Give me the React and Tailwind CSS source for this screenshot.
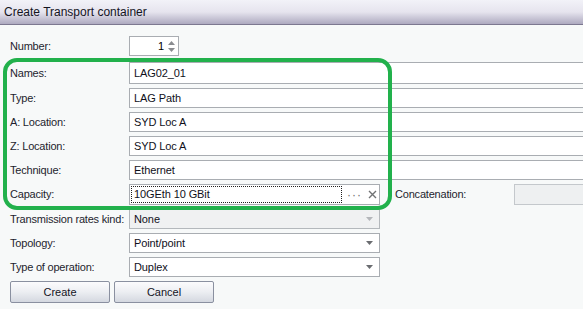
import React from "react";

const font = { fontFamily: '"Liberation Sans", Arial, sans-serif' };

function Label({ children }) {
  return (
    <div className="w-[129px] shrink-0 whitespace-nowrap pl-[10px] text-[11px] tracking-[-0.2px] text-[#1e1e2e]">
      {children}
    </div>
  );
}

function TextField({ value, className = "w-[470px]" }) {
  return (
    <div
      className={`flex h-full shrink-0 items-center border border-[#a9adb2] bg-white pl-[4px] text-[11px] tracking-[-0.1px] text-[#10101a] ${className}`}
    >
      {value}
    </div>
  );
}

function Arrow({ light }) {
  return (
    <svg width="7" height="4" viewBox="0 0 7 4" className="mr-[6px]">
      <path d="M0 0h7L3.5 4z" fill={light ? "#b4b6ba" : "#6a6c70"} />
    </svg>
  );
}

function Select({ value, disabled }) {
  return (
    <div
      className={`flex h-full w-[251px] items-center justify-between border pl-[4px] text-[11px] tracking-[-0.1px] text-[#10101a] ${
        disabled ? "border-[#b4b8bc] bg-[#f0f1f2]" : "border-[#a9adb2] bg-white"
      }`}
    >
      <span>{value}</span>
      <Arrow light={disabled} />
    </div>
  );
}

function Row({ label, h = "h-[20px]", children }) {
  return (
    <div className={`flex items-center ${h}`}>
      <Label>{label}</Label>
      {children}
    </div>
  );
}

export default function App() {
  return (
    <div className="relative h-[309px] w-[583px] overflow-hidden bg-[#f7f9f9]" style={font}>
      <div className="flex h-[25px] items-center border-b border-[#7c7890] bg-gradient-to-b from-[#f2f2f8] via-[#e6e4ee] to-[#aeaac0] pl-[4px] text-[12px] text-[#14141e]">
        Create Transport container
      </div>

      <div className="flex flex-col pt-[11px]">
        <Row label="Number:">
          <div className="flex h-full w-[50px] items-center justify-end border border-[#a9adb2] bg-white text-[11px]">
            <span className="mr-[4px]">1</span>
            <div className="mr-[3px] flex flex-col gap-[3px]">
              <svg width="7" height="4" viewBox="0 0 7 4"><path d="M0 4h7L3.5 0z" fill="#8a8c90" /></svg>
              <svg width="7" height="4" viewBox="0 0 7 4"><path d="M0 0h7L3.5 4z" fill="#8a8c90" /></svg>
            </div>
          </div>
        </Row>

        <div className="mt-[6px] flex flex-col gap-[4px]">
          <Row label="Names:" h="h-[22px]"><TextField value="LAG02_01" /></Row>
          <Row label="Type:"><TextField value="LAG Path" /></Row>
          <Row label="A: Location:"><TextField value="SYD Loc A" /></Row>
          <Row label="Z: Location:"><TextField value="SYD Loc A" /></Row>
          <Row label="Technique:"><TextField value="Ethernet" /></Row>
          <Row label="Capacity:" h="h-[21px]">
            <div className="flex h-full w-[251px] shrink-0 items-center border border-[#a9adb2] bg-white">
              <div className="ml-[1px] flex h-[17px] w-[211px] items-center border border-dotted border-[#202020] pl-[2px] text-[11px] tracking-[-0.1px] text-[#10101a]">
                10GEth 10 GBit
              </div>
              <span className="ml-[5px] text-[12px] leading-none tracking-[1px] text-[#707274]">···</span>
              <svg width="9" height="9" viewBox="0 0 9 9" className="ml-[6px]">
                <path d="M1 1l7 7M8 1L1 8" stroke="#707274" strokeWidth="1.4" />
              </svg>
            </div>
            <span className="ml-[15px] w-[119px] shrink-0 text-[11px] tracking-[-0.2px] text-[#1e1e2e]">Concatenation:</span>
            <div className="h-full w-[100px] shrink-0 border border-[#c4c8cc] bg-[#eef0f1]" />
          </Row>
          <Row label="Transmission rates kind:"><Select value="None" disabled /></Row>
          <Row label="Topology:"><Select value="Point/point" /></Row>
          <Row label="Type of operation:"><Select value="Duplex" /></Row>
        </div>

        <div className="mt-[4px] flex gap-[4px] pl-[10px]">
          {["Create", "Cancel"].map((b) => (
            <div
              key={b}
              className="flex h-[22px] w-[100px] items-center justify-center rounded-[2px] border border-[#8a90a0] bg-gradient-to-b from-[#fbfbfd] via-[#eceef2] to-[#d4d8e0] text-[11px] text-[#14141e]"
            >
              {b}
            </div>
          ))}
        </div>
      </div>

      <div className="pointer-events-none absolute left-[3px] top-[58px] h-[152px] w-[389px] rounded-[14px] border-[4px] border-[#22b14c]" />
    </div>
  );
}
